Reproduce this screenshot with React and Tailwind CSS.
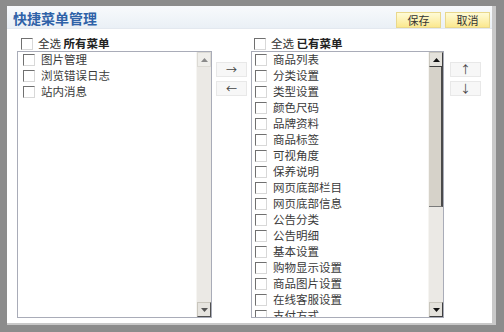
const LEFT_ITEMS = ['图片管理', '浏览错误日志', '站内消息'];

const RIGHT_ITEMS = [
  '商品列表',
  '分类设置',
  '类型设置',
  '颜色尺码',
  '品牌资料',
  '商品标签',
  '可视角度',
  '保养说明',
  '网页底部栏目',
  '网页底部信息',
  '公告分类',
  '公告明细',
  '基本设置',
  '购物显示设置',
  '商品图片设置',
  '在线客服设置',
  '支付方式',
];

const FONT = { fontFamily: '"Noto Sans CJK SC", "Noto Sans", sans-serif' };

const CheckBox = () => (
  <span className="block w-[12px] h-[12px] shrink-0 bg-white border border-t-[#707070] border-l-[#707070] border-b-[#d8d8d8] border-r-[#d8d8d8]" />
);

const Arrow = ({ dir, color }) => (
  <svg width="7" height="4" viewBox="0 0 7 4">
    {dir === 'up' ? <path d="M0 4 L3.5 0 L7 4 Z" fill={color} /> : <path d="M0 0 L3.5 4 L7 0 Z" fill={color} />}
  </svg>
);

const ScrollBar = ({ thumb }) => (
  <div className="w-[15px] flex flex-col bg-[#ebe9e5] border-l border-[#f6f5f2]">
    <div className={`h-[15px] flex items-center justify-center border ${thumb ? 'bg-[#e4e2dc] border-[#c9c6bd] border-r-[#404040] border-b-[#404040]' : 'bg-[#efeeea] border-[#dcdad4]'}`}>
      <Arrow dir="up" color={thumb ? '#111' : '#8a8a8a'} />
    </div>
    {thumb && <div className="h-[140px] bg-[#d6d2c9] border-r-2 border-[#4a4a4a] border-b border-b-[#7a7a7a]" />}
    <div className="flex-1" />
    <div className={`h-[15px] flex items-center justify-center border ${thumb ? 'bg-[#e4e2dc] border-[#c9c6bd] border-r-[#404040] border-b-[#404040]' : 'bg-[#e6e4df] border-[#c9c6bd] border-r-[#505050] border-b-[#505050]'}`}>
      <Arrow dir="down" color={thumb ? '#111' : '#555'} />
    </div>
  </div>
);

const ListBox = ({ items, width, thumb, padL }) => (
  <div className={`${width} h-[267px] flex border border-[#a9acb8] bg-white overflow-hidden`}>
    <div className={`flex-1 flex flex-col ${padL}`}>
      {items.map((item) => (
        <div key={item} className="h-[16px] shrink-0 flex items-center gap-[6px]">
          <CheckBox />
          <span className="text-[11.5px] leading-none text-[#3a3a3a]">{item}</span>
        </div>
      ))}
    </div>
    <ScrollBar thumb={thumb} />
  </div>
);

const SideButton = ({ label }) => (
  <button className="w-[31px] h-[15px] flex items-center justify-center bg-[#f7f7f7] border border-[#e8e8e8] text-[11px] leading-none text-[#444]">
    {label}
  </button>
);

const YellowButton = ({ label }) => (
  <button className="w-[45px] h-[16px] flex items-center justify-center bg-gradient-to-b from-[#fffbd6] to-[#fbe88e] border border-[#e9d88c] text-[11px] leading-none text-[#333]">
    {label}
  </button>
);

export default function App() {
  return (
    <div className="w-[504px] h-[332px] bg-[#8c8c8c] pt-[6px] pl-[7px] pr-[8px] pb-[7px]" style={FONT}>
      <div className="w-full h-full bg-white border-r-4 border-b-2 border-[#c9c9c9] flex flex-col">
        {/* Title bar */}
        <div className="h-[23px] flex items-start justify-between pl-[6px] pr-[2px] bg-gradient-to-b from-[#f8fafc] to-[#eaf0f6] border-b border-[#e3e8ef]">
          <span className="text-[14px] leading-[24px] font-semibold text-[#2f62a8]">快捷菜单管理</span>
          <div className="flex gap-[4px] mt-[6px]">
            <YellowButton label="保存" />
            <YellowButton label="取消" />
          </div>
        </div>

        {/* Body */}
        <div className="flex pl-[10px] pt-[7px]">
          <div className="flex flex-col">
            <div className="h-[15px] flex items-center gap-[5px] pl-[4px]">
              <CheckBox />
              <span className="text-[11.5px] leading-none text-[#333]">
                全选 <span className="font-bold text-[#222]">所有菜单</span>
              </span>
            </div>
            <ListBox items={LEFT_ITEMS} width="w-[195px]" padL="pl-[5px]" />
          </div>

          <div className="flex flex-col gap-[4px] mt-[26px] mx-[4px]">
            <SideButton label="→" />
            <SideButton label="←" />
          </div>

          <div className="flex flex-col">
            <div className="h-[15px] flex items-center gap-[5px] pl-[3px]">
              <CheckBox />
              <span className="text-[11.5px] leading-none text-[#333]">
                全选 <span className="font-bold text-[#222]">已有菜单</span>
              </span>
            </div>
            <ListBox items={RIGHT_ITEMS} width="w-[193px]" thumb padL="pl-[3px]" />
          </div>

          <div className="flex flex-col gap-[4px] mt-[26px] ml-[6px]">
            <SideButton label="↑" />
            <SideButton label="↓" />
          </div>
        </div>
      </div>
    </div>
  );
}
